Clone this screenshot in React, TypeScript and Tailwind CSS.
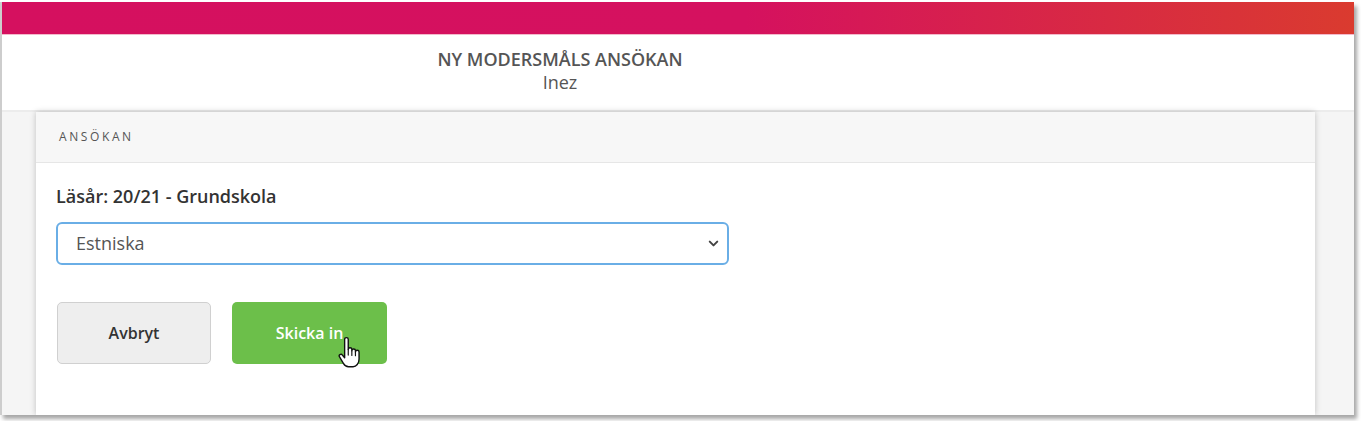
import { ChevronDown } from 'lucide-react';

/**
 * Hand pointer cursor drawn over the submit button
 */
function HandCursor() {
  return (
    <svg width="26" height="36" viewBox="0 0 24 34" className="absolute left-[106px] top-[34px]">
      <path
        d="M6 3.2a1.7 1.7 0 0 1 3.4 0v9.6a1.7 1.7 0 0 1 3.4 0v1.2a1.7 1.7 0 0 1 3.4 0v1.2a1.7 1.7 0 0 1 3.4 0v6.5c0 4.2-2.6 7.3-5.6 7.3h-4.4c-2.3 0-3.6-1.2-4.8-3.2l-3.6-6a1.6 1.6 0 0 1 2.6-1.9l2.2 2.6z"
        fill="#fff"
        stroke="#111"
        strokeWidth="1.3"
        strokeLinejoin="round"
      />
      <path d="M9.4 12.8v5.2M12.8 14v4.4M16.2 15.2v3.4" stroke="#111" strokeWidth="1.1" strokeLinecap="round" />
    </svg>
  );
}

function App() {
  return (
    <div className="h-[421px] w-[1361px] overflow-hidden bg-white font-['Open_Sans',sans-serif]">
      {/* Browser window */}
      <div className="mt-[2px] flex h-[413px] w-[1354px] flex-col overflow-hidden border-l-2 border-[#cdcdcd] shadow-[3px_4px_4px_rgba(0,0,0,0.35)]">
        {/* Brand bar */}
        <div className="h-[32px] shrink-0 bg-[linear-gradient(90deg,#d5105f_0%,#d5115f_55%,#da3b2f_100%)]" />
        <div className="h-px shrink-0 bg-[#f3b9cb]" />

        {/* Page header */}
        <div className="flex h-[77px] shrink-0 flex-col border-b-2 border-[#ececec] bg-white">
          <div className="w-[1116px] pt-[13px] text-center text-[#555]">
            <div className="text-[18px] font-semibold leading-[23px]">NY MODERSMÅLS ANSÖKAN</div>
            <div className="text-[18px] leading-[22px]">Inez</div>
          </div>
        </div>

        {/* Main area */}
        <div className="flex flex-1 bg-[#f5f5f5] pl-[34px]">
          <div className="flex w-[1279px] flex-col bg-white shadow-[0_0_6px_rgba(0,0,0,0.22)]">
            <div className="flex h-[51px] shrink-0 items-center border-b border-[#e6e6e6] bg-[#f7f7f7] px-[23px]">
              <span className="text-[12px] tracking-[2.6px] text-[#555]">ANSÖKAN</span>
            </div>

            <div className="flex flex-col px-[20px] pt-[21px]">
              <div className="text-[18px] font-semibold leading-[25px] text-[#333]">Läsår: 20/21 - Grundskola</div>

              <div className="mt-[13px] flex h-[43px] w-[673px] items-center justify-between rounded-[6px] border-2 border-[#6aaee6] pl-[18px] pr-[6px]">
                <span className="text-[18px] text-[#555]">Estniska</span>
                <ChevronDown size={15} strokeWidth={3.2} className="text-[#444]" />
              </div>

              <div className="mt-[37px] ml-px flex gap-[21px]">
                <button className="flex h-[62px] w-[154px] items-center justify-center rounded-[5px] border border-[#d0d0d0] bg-[#eeeeee] text-[16px] font-semibold text-[#333]">
                  Avbryt
                </button>
                <button className="relative flex h-[62px] w-[155px] items-center justify-center rounded-[5px] bg-[#6cbf4a] text-[16px] font-semibold text-white">
                  Skicka in
                  <HandCursor />
                </button>
              </div>
            </div>
          </div>
        </div>
      </div>
    </div>
  );
}

export default App;
